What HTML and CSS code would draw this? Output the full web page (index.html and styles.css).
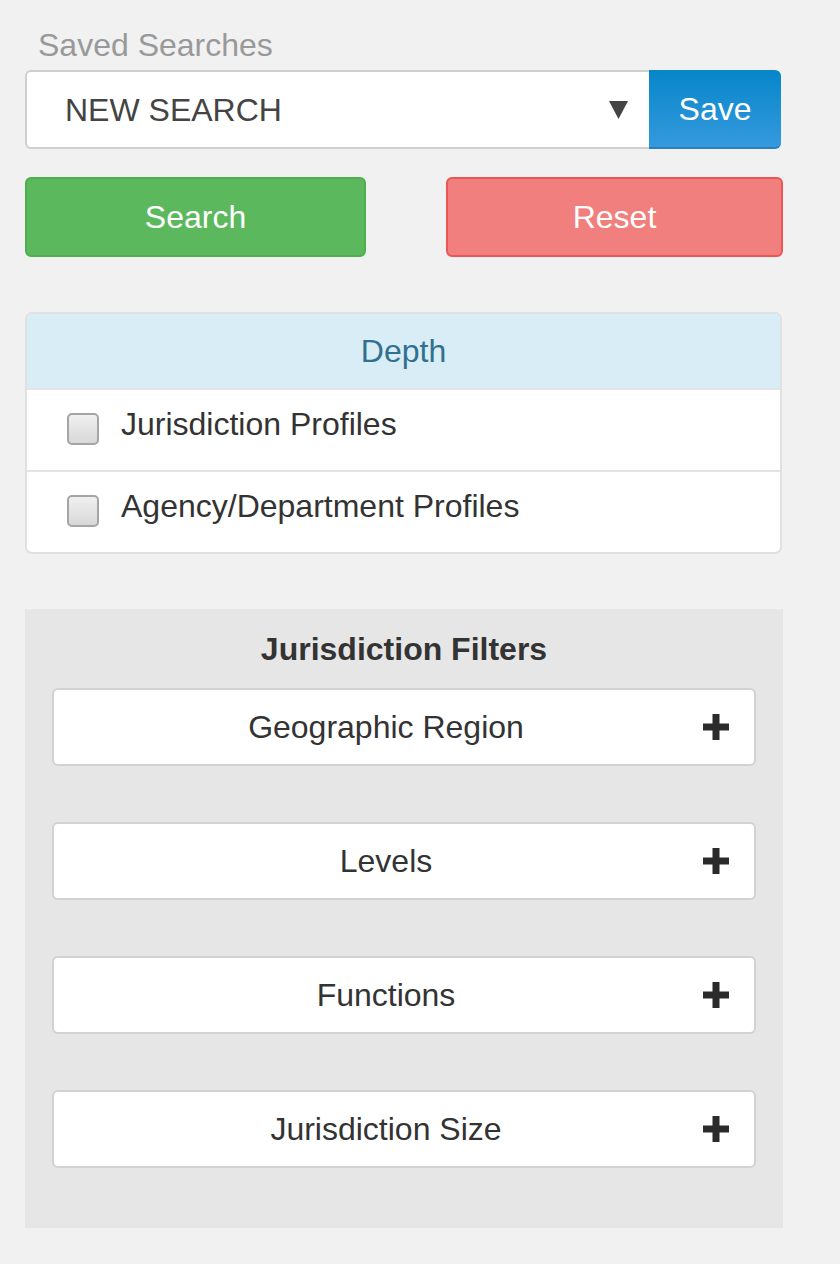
FILE: index.html
```html
<!DOCTYPE html>
<html lang="en">
<head>
<meta charset="utf-8">
<title>Saved Searches</title>
<link rel="stylesheet" href="styles.css">
</head>
<body>
<div class="sidebar">
  <div class="field-label">Saved Searches</div>
  <div class="input-group">
    <div class="select">
      <span class="select-text">NEW SEARCH</span>
      <svg class="caret" width="19" height="18" viewBox="0 0 19 18"><polygon points="0,0 19,0 9.5,18" fill="#444"/></svg>
    </div>
    <button class="btn btn-save">Save</button>
  </div>
  <div class="actions">
    <button class="btn btn-search">Search</button>
    <button class="btn btn-reset">Reset</button>
  </div>

  <div class="panel">
    <div class="panel-heading">Depth</div>
    <div class="panel-row">
      <span class="checkbox"></span>
      <span class="row-label">Jurisdiction Profiles</span>
    </div>
    <div class="panel-row">
      <span class="checkbox"></span>
      <span class="row-label">Agency/Department Profiles</span>
    </div>
  </div>

  <div class="filters">
    <div class="filters-title">Jurisdiction Filters</div>
    <div class="filter-list">
      <div class="filter"><span class="filter-text">Geographic Region</span><svg class="plus" width="26" height="26" viewBox="0 0 26 26"><path d="M9.5 0h7v9.5H26v7h-9.5V26h-7v-9.5H0v-7h9.5z" fill="#2b2b2b"/></svg></div>
      <div class="filter"><span class="filter-text">Levels</span><svg class="plus" width="26" height="26" viewBox="0 0 26 26"><path d="M9.5 0h7v9.5H26v7h-9.5V26h-7v-9.5H0v-7h9.5z" fill="#2b2b2b"/></svg></div>
      <div class="filter"><span class="filter-text">Functions</span><svg class="plus" width="26" height="26" viewBox="0 0 26 26"><path d="M9.5 0h7v9.5H26v7h-9.5V26h-7v-9.5H0v-7h9.5z" fill="#2b2b2b"/></svg></div>
      <div class="filter"><span class="filter-text">Jurisdiction Size</span><svg class="plus" width="26" height="26" viewBox="0 0 26 26"><path d="M9.5 0h7v9.5H26v7h-9.5V26h-7v-9.5H0v-7h9.5z" fill="#2b2b2b"/></svg></div>
    </div>
  </div>
</div>
</body>
</html>
```

FILE: styles.css
```css
* { box-sizing: border-box; }
html, body {
  margin: 0;
  padding: 0;
  background: #f1f1f1;
}
body {
  font-family: "Liberation Sans", Arial, sans-serif;
  font-size: 32px;
  line-height: 36px;
  color: #333;
}
.sidebar {
  width: 758px;
  margin-left: 25px;
  padding-top: 27px;
  padding-bottom: 36px;
}
.field-label {
  color: #999;
  padding-left: 13px;
  margin-bottom: 7px;
}
.input-group {
  display: flex;
  width: 756px;
  height: 79px;
}
.select {
  flex: 1;
  display: flex;
  align-items: center;
  background: #fff;
  border: 2px solid #cfcfcf;
  border-right: none;
  border-radius: 6px 0 0 6px;
  padding-left: 38px;
  padding-right: 21px;
  color: #444;
}
.select-text { flex: 1; }
.caret { display: block; }
.btn {
  font-family: "Liberation Sans", Arial, sans-serif;
  font-size: 32px;
  line-height: 36px;
  color: #fff;
  padding: 0;
  margin: 0;
  cursor: pointer;
}
.btn-save {
  width: 132px;
  height: 79px;
  border: none;
  border-bottom: 2px solid #2b7fbe;
  border-radius: 0 6px 6px 0;
  background: linear-gradient(to bottom, #0786ca 0%, #3599dd 100%);
}
.actions {
  display: grid;
  grid-template-columns: 341px 337px;
  justify-content: space-between;
  margin-top: 28px;
}
.btn-search {
  height: 80px;
  background: #5cb85c;
  border: 2px solid #4cae4c;
  border-radius: 6px;
}
.btn-reset {
  height: 80px;
  background: #f07f7e;
  border: 2px solid #e85656;
  border-radius: 6px;
}
.panel {
  width: 757px;
  margin-top: 55px;
  background: #fff;
  border: 2px solid #e0e0e0;
  border-radius: 7px;
  overflow: hidden;
}
.panel-heading {
  height: 74px;
  background: #d9edf7;
  color: #31708f;
  text-align: center;
  display: flex;
  align-items: center;
  justify-content: center;
}
.panel-row {
  height: 82px;
  border-top: 2px solid #e3e3e3;
  display: flex;
  align-items: flex-start;
  padding-left: 40px;
}
.checkbox {
  width: 32px;
  height: 32px;
  margin-top: 23px;
  margin-right: 22px;
  border: 2px solid #a5a5a5;
  border-radius: 5px;
  background: linear-gradient(to bottom, #f0f0f0 0%, #d8d8d8 100%);
  flex: none;
}
.row-label {
  margin-top: 16px;
  color: #333;
}
.filters {
  margin-top: 55px;
  background: #e6e6e6;
  padding: 22px 27px 60px;
}
.filters-title {
  font-weight: bold;
  text-align: center;
  color: #333;
}
.filter-list {
  margin-top: 21px;
  display: flex;
  flex-direction: column;
  gap: 56px;
}
.filter {
  height: 78px;
  background: #fff;
  border: 2px solid #d2d2d2;
  border-radius: 6px;
  display: flex;
  align-items: center;
  padding: 0 25px 0 15px;
}
.filter-text {
  flex: 1;
  text-align: center;
  color: #333;
}
.plus { display: block; flex: none; }
```
